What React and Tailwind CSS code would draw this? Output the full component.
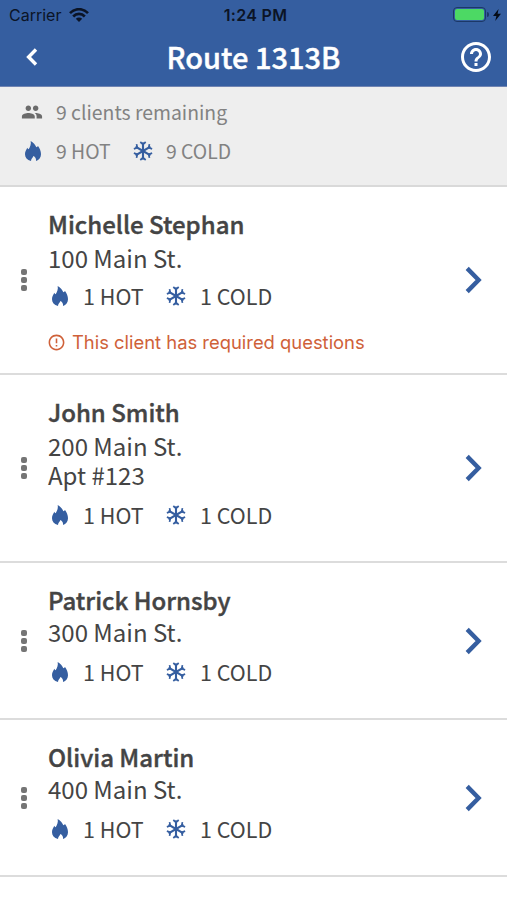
/**
 * Route screen: the status bar and title, a summary of what is left to
 * deliver, and one row for each client on the route.
 */
import React from "react";
import { MdPeople, MdHelpOutline, MdErrorOutline } from "react-icons/md";

const CLIENTS = [
  {
    name: "Michelle Stephan",
    address: ["100 Main St."],
    hot: 1,
    cold: 1,
    warning: "This client has required questions",
    rowClass: "h-[188px]",
    addressClass: "mt-[3px] mb-[9px]",
  },
  {
    name: "John Smith",
    address: ["200 Main St.", "Apt #123"],
    hot: 1,
    cold: 1,
    rowClass: "h-[188px]",
    addressClass: "mt-[3px] mb-[11px]",
  },
  {
    name: "Patrick Hornsby",
    address: ["300 Main St."],
    hot: 1,
    cold: 1,
    rowClass: "h-[157px]",
    addressClass: "mt-px mb-[11px]",
  },
  {
    name: "Olivia Martin",
    address: ["400 Main St."],
    hot: 1,
    cold: 1,
    rowClass: "h-[157px]",
    addressClass: "mt-px mb-[11px]",
  },
];

export default function App() {
  return (
    <div className="w-[507px] h-[900px] overflow-hidden bg-white font-['Noto_Sans_CJK_SC',sans-serif] text-[#444444]">
      <Header title="Route 1313B" />
      <Summary remaining={9} hot={9} cold={9} />
      {CLIENTS.map((client) => (
        <ClientRow key={client.name} client={client} />
      ))}
    </div>
  );
}

function Header({ title }) {
  return (
    <header className="h-[87px] bg-[#355ea0] border-b border-[#7084b2]">
      <div className="h-[29px] pl-[9px] pr-[6px] grid grid-cols-[1fr_auto_1fr] items-center font-[Inter,sans-serif] text-[16px] text-[#0b1426]">
        <div className="flex items-center gap-2 pt-px">
          <span>Carrier</span>
          <WifiIcon />
        </div>
        <span className="-mr-px pt-px font-semibold tracking-[0.3px]">1:24 PM</span>
        <div className="flex items-center justify-end">
          <div className="w-[33px] h-[15px] rounded-[4px] border-[1.5px] border-[#1c3867] p-px">
            <div className="h-full rounded-[2px] bg-[#4cd964]" />
          </div>
          <div className="ml-px w-[2px] h-[5px] rounded-r-full bg-[#1c3867]" />
          <svg className="ml-[4px]" width="8" height="12" viewBox="0 0 8 12" fill="#050b16">
            <path d="M5.6 0 0 7h3.4L2.2 12 8 4.8H4.6z" />
          </svg>
        </div>
      </div>
      <div className="h-[55px] pl-[26px] pr-[13px] grid grid-cols-[1fr_auto_1fr] items-center text-white">
        <svg width="12" height="18" viewBox="0 0 12 18" fill="none" stroke="currentColor" strokeWidth="3.4">
          <path d="M10 1.5 2.6 9 10 16.5" />
        </svg>
        <h1 className="-ml-[13px] -mt-[2px] text-[29px] leading-[40px] font-medium [-webkit-text-stroke:0.4px]">{title}</h1>
        <MdHelpOutline size={36} className="justify-self-end" />
      </div>
    </header>
  );
}

function Summary({ remaining, hot, cold }) {
  return (
    <section className="h-[100px] bg-[#eeeeee] border-b-2 border-[#d9d9d9] pl-[21px] pt-[9px] text-[19.4px] leading-[32px] text-[#828282]">
      <div className="flex items-center">
        <MdPeople size={22} className="mr-[13px] text-[#6b6b6b]" />
        <span>{remaining} clients remaining</span>
      </div>
      <div className="mt-[7px] flex items-center pl-[4px]">
        <FlameIcon />
        <span className="ml-[15px] w-[77px]">{hot} HOT</span>
        <SnowIcon />
        <span className="ml-[13px]">{cold} COLD</span>
      </div>
    </section>
  );
}

function ClientRow({ client }) {
  const { name, address, hot, cold, warning, rowClass, addressClass } = client;

  return (
    <div className={`flex items-center pl-[21px] pr-[25px] border-b-2 border-[#dcdcdc] ${rowClass}`}>
      <DragHandle />
      <div className="self-start grow ml-[21px] pt-[21px]">
        <h2 className="text-[24px] leading-[32px] font-medium [-webkit-text-stroke:0.4px]">{name}</h2>
        <div className={`text-[24px] leading-[29px] ${addressClass}`}>
          {address.map((line) => (
            <div key={line}>{line}</div>
          ))}
        </div>
        <div className="flex items-center pl-[4px] text-[21.5px] leading-[30px]">
          <FlameIcon />
          <span className="ml-[15px] w-[83px]">{hot} HOT</span>
          <SnowIcon />
          <span className="ml-[14px]">{cold} COLD</span>
        </div>
        {warning && (
          <div className="mt-[19px] -ml-px flex items-center gap-[6px] font-[Inter,sans-serif] text-[18.4px] leading-[24px] text-[#cf6139]">
            <MdErrorOutline size={19} />
            <span>{warning}</span>
          </div>
        )}
      </div>
      <svg width="17" height="28" viewBox="0 0 17 28" fill="none" stroke="#355ea0" strokeWidth="4.4">
        <path d="M2.2 2.4 13.6 14 2.2 25.6" />
      </svg>
    </div>
  );
}

function DragHandle() {
  return (
    <div className="w-[6px] flex flex-col gap-[2px]">
      <i className="h-[6px] rounded-[2px] bg-[#757575]" />
      <i className="h-[6px] rounded-[2px] bg-[#757575]" />
      <i className="h-[6px] rounded-[2px] bg-[#757575]" />
    </div>
  );
}

function FlameIcon() {
  return (
    <svg className="shrink-0" width="16" height="20" viewBox="0 0 48 60" fill="#355ea0">
      <path d="M17 0C25 5 31 11 34 19C36 18 38 17 39 15C44 21 48 30 48 40C48 50 42 57 33 60C34 53 31 48 25 45C24 50 18 54 18 60C6 57 0 50 0 40C0 32 3 27 7 20C8 22 9 24 11 25C15 18 19 10 17 0Z" />
    </svg>
  );
}

// one arm pointing up, turned six times round the centre
function SnowIcon() {
  return (
    <svg className="shrink-0" width="20" height="20" viewBox="-10 -10 20 20" fill="none" stroke="#355ea0">
      {[0, 60, 120, 180, 240, 300].map((angle) => (
        <g key={angle} transform={`rotate(${angle})`}>
          <path d="M0 0V-8.6" strokeWidth="2.1" />
          <path d="M-2.7 -9 0 -6.6 2.7 -9" strokeWidth="1.7" />
        </g>
      ))}
    </svg>
  );
}

function WifiIcon() {
  return (
    <svg width="20" height="14" viewBox="0 0 20 14" fill="none" stroke="currentColor" strokeWidth="2.6">
      <path d="M1 5.2C6-.2 14-.2 19 5.2M4.2 8.5C7.4 5 12.6 5 15.8 8.5" />
      <path d="M10 14 6.8 10.8C8.6 9 11.4 9 13.2 10.8Z" fill="currentColor" stroke="none" />
    </svg>
  );
}
